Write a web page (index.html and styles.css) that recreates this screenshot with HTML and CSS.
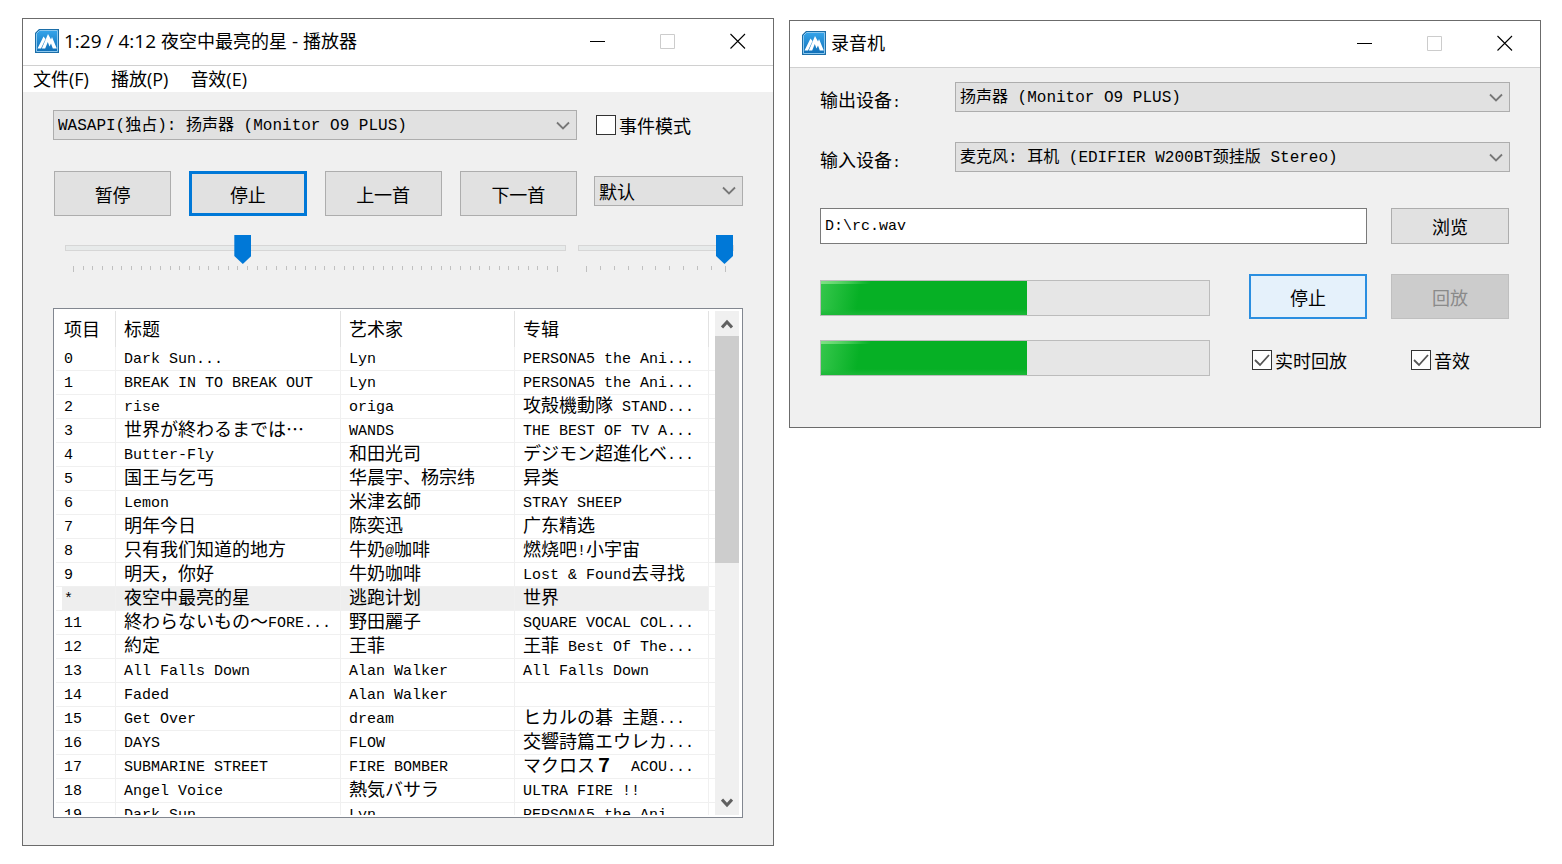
FILE: index.html
```html
<!DOCTYPE html>
<html lang="zh-CN">
<head>
<meta charset="utf-8">
<title>播放器</title>
<link rel="stylesheet" href="styles.css">
</head>
<body>
<svg class="defs" aria-hidden="true">
  <defs>
    <linearGradient id="sky" x1="0" y1="0" x2="0" y2="1">
      <stop offset="0" stop-color="#35a4ea"/>
      <stop offset="1" stop-color="#1170b8"/>
    </linearGradient>
    <symbol id="logo" viewBox="0 0 24 24">
      <path d="M4 0H24V24H0V4Z" fill="#1c6ea8"/>
      <path d="M4.500 1.500H22.500V22.500H1.500V4.500Z" fill="url(#sky)" stroke="#8cc8ee" stroke-width="1"/>
      <path d="M2.500 19.500L8.500 7.500L10.500 10L6 19.500ZM6.800 19.500L13 5L16 10.500L17 8L21.800 19.500H17.800L16 14.500L14.500 17.500L12.800 13L10.200 19.500Z" fill="#fff"/>
    </symbol>
    <symbol id="min" viewBox="0 0 16 16"><path d="M0 8.500H15" stroke="#000"/></symbol>
    <symbol id="max" viewBox="0 0 16 16"><path d="M.5 1.500H14.500V15.500H.5Z" stroke="#ccc" fill="none"/></symbol>
    <symbol id="close" viewBox="0 0 16 16"><path d="M.5 1L15 15.500M15 1L.5 15.500" stroke="#000" stroke-width="1.100"/></symbol>
  </defs>
</svg>

<main class="desktop">
  <section class="window player" aria-label="播放器">
    <header class="titlebar">
      <svg class="logo"><use href="#logo"/></svg>
      <h1 class="title"><span>1:29 / 4:12 </span>夜空中最亮的星<span> - </span>播放器</h1>
      <button class="caption" aria-label="最小化"><svg><use href="#min"/></svg></button>
      <button class="caption" aria-label="最大化" disabled><svg><use href="#max"/></svg></button>
      <button class="caption" aria-label="关闭"><svg><use href="#close"/></svg></button>
    </header>
    <nav class="menu">
      <button>文件(F)</button>
      <button>播放(P)</button>
      <button>音效(E)</button>
    </nav>
    <div class="player-body">
      <div class="controls">
        <select class="combo" aria-label="输出"><option>WASAPI(独占): 扬声器 (Monitor O9 PLUS)</option></select>
        <label class="check"><input type="checkbox">事件模式</label>
        <div class="transport">
          <button class="push">暂停</button>
          <button class="push focused">停止</button>
          <button class="push">上一首</button>
          <button class="push">下一首</button>
        </div>
        <select class="combo cjk" aria-label="播放模式"><option>默认</option></select>
      </div>
      <div class="sliders">
        <div class="slider">
          <input type="range" min="0" max="252" value="88" aria-label="进度">
          <div class="ticks"><i></i><i></i><i></i><i></i><i></i><i></i><i></i><i></i><i></i><i></i><i></i><i></i><i></i><i></i><i></i><i></i><i></i><i></i><i></i><i></i><i></i><i></i><i></i><i></i><i></i><i></i><i></i><i></i><i></i><i></i><i></i><i></i><i></i><i></i><i></i><i></i><i></i><i></i><i></i><i></i><i></i><i></i><i></i><i></i><i></i><i></i><i></i><i></i><i></i><i></i><i></i></div>
        </div>
        <div class="slider volume">
          <input type="range" min="0" max="10" value="10" aria-label="音量">
          <div class="ticks"><i></i><i></i><i></i><i></i><i></i><i></i><i></i><i></i><i></i><i></i><i></i></div>
        </div>
      </div>
      <div class="list">
        <div class="rows">
          <table>
            <colgroup><col class="c-no"><col class="c-title"><col class="c-artist"><col><col class="c-end"></colgroup>
            <thead><tr><th>项目</th><th>标题</th><th>艺术家</th><th>专辑</th><th></th></tr></thead>
            <tbody>
              <tr><td>0</td><td>Dark Sun...</td><td>Lyn</td><td>PERSONA5 the Ani...</td><td></td></tr>
              <tr><td>1</td><td>BREAK IN TO BREAK OUT</td><td>Lyn</td><td>PERSONA5 the Ani...</td><td></td></tr>
              <tr><td>2</td><td>rise</td><td>origa</td><td><span class="cjk">攻殻機動隊</span> STAND...</td><td></td></tr>
              <tr><td>3</td><td><span class="cjk" lang="ja">世界が終わるまでは…</span></td><td>WANDS</td><td>THE BEST OF TV A...</td><td></td></tr>
              <tr><td>4</td><td>Butter-Fly</td><td><span class="cjk">和田光司</span></td><td><span class="cjk" lang="ja">デジモン超進化ベ</span>...</td><td></td></tr>
              <tr><td>5</td><td><span class="cjk">国王与乞丐</span></td><td><span class="cjk">华晨宇、杨宗纬</span></td><td><span class="cjk">异类</span></td><td></td></tr>
              <tr><td>6</td><td>Lemon</td><td><span class="cjk">米津玄師</span></td><td>STRAY SHEEP</td><td></td></tr>
              <tr><td>7</td><td><span class="cjk">明年今日</span></td><td><span class="cjk">陈奕迅</span></td><td><span class="cjk">广东精选</span></td><td></td></tr>
              <tr><td>8</td><td><span class="cjk">只有我们知道的地方</span></td><td><span class="cjk">牛奶</span>@<span class="cjk">咖啡</span></td><td><span class="cjk">燃烧吧</span>!<span class="cjk">小宇宙</span></td><td></td></tr>
              <tr><td>9</td><td><span class="cjk">明天，你好</span></td><td><span class="cjk">牛奶咖啡</span></td><td>Lost &amp; Found<span class="cjk">去寻找</span></td><td></td></tr>
              <tr class="current"><td>*</td><td><span class="cjk">夜空中最亮的星</span></td><td><span class="cjk">逃跑计划</span></td><td><span class="cjk">世界</span></td><td></td></tr>
              <tr><td>11</td><td><span class="cjk" lang="ja">終わらないもの～</span>FORE...</td><td><span class="cjk">野田麗子</span></td><td>SQUARE VOCAL COL...</td><td></td></tr>
              <tr><td>12</td><td><span class="cjk">約定</span></td><td><span class="cjk">王菲</span></td><td><span class="cjk">王菲</span> Best Of The...</td><td></td></tr>
              <tr><td>13</td><td>All Falls Down</td><td>Alan Walker</td><td>All Falls Down</td><td></td></tr>
              <tr><td>14</td><td>Faded</td><td>Alan Walker</td><td></td><td></td></tr>
              <tr><td>15</td><td>Get Over</td><td>dream</td><td><span class="cjk" lang="ja">ヒカルの碁</span> <span class="cjk" lang="ja">主題</span>...</td><td></td></tr>
              <tr><td>16</td><td>DAYS</td><td>FLOW</td><td><span class="cjk" lang="ja">交響詩篇エウレカ</span>...</td><td></td></tr>
              <tr><td>17</td><td>SUBMARINE STREET</td><td>FIRE BOMBER</td><td><span class="cjk" lang="ja">マクロス<b>７</b>　</span>ACOU...</td><td></td></tr>
              <tr><td>18</td><td>Angel Voice</td><td><span class="cjk" lang="ja">熱気バサラ</span></td><td>ULTRA FIRE !!</td><td></td></tr>
              <tr><td>19</td><td>Dark Sun...</td><td>Lyn</td><td>PERSONA5 the Ani...</td><td></td></tr>
            </tbody>
          </table>
        </div>
        <div class="scrollbar">
          <button aria-label="向上滚动"><svg viewBox="0 0 12 10"><path d="M1 8.500L6 3L11 8.500"/></svg></button>
          <div class="lane"><div class="thumb"></div></div>
          <button aria-label="向下滚动"><svg viewBox="0 0 12 10"><path d="M1 1.500L6 7L11 1.500"/></svg></button>
        </div>
      </div>
    </div>
  </section>

  <section class="window recorder" aria-label="录音机">
    <header class="titlebar">
      <svg class="logo"><use href="#logo"/></svg>
      <h1 class="title">录音机</h1>
      <button class="caption" aria-label="最小化"><svg><use href="#min"/></svg></button>
      <button class="caption" aria-label="最大化" disabled><svg><use href="#max"/></svg></button>
      <button class="caption" aria-label="关闭"><svg><use href="#close"/></svg></button>
    </header>
    <div class="recorder-body">
      <div class="devices">
        <label for="out">输出设备<span class="mono">:</span></label>
        <select id="out" class="combo"><option>扬声器 (Monitor O9 PLUS)</option></select>
        <label for="in">输入设备<span class="mono">:</span></label>
        <select id="in" class="combo"><option>麦克风: 耳机 (EDIFIER W200BT颈挂版 Stereo)</option></select>
      </div>
      <div class="file">
        <input type="text" class="path" value="D:\rc.wav" aria-label="文件路径">
        <button class="push short">浏览</button>
      </div>
      <div class="record">
        <div class="meters">
          <progress max="100" value="53" aria-label="左声道"></progress>
          <progress max="100" value="53" aria-label="右声道"></progress>
        </div>
        <div class="column">
          <button class="push hot">停止</button>
          <label class="check inset"><input type="checkbox" checked>实时回放</label>
        </div>
        <div class="column">
          <button class="push" disabled>回放</button>
          <label class="check indent"><input type="checkbox" checked>音效</label>
        </div>
      </div>
    </div>
  </section>
</main>
</body>
</html>
```

FILE: styles.css
```css
* { box-sizing: border-box; }

body {
  margin: 0;
  background: #fff;
  color: #000;
  font: 18px/24px "Noto Sans CJK SC", sans-serif;
}

button, select, input { margin: 0; font: inherit; color: inherit; border-radius: 0; }
button { padding: 0; border: 0; background: none; }

.defs { position: absolute; width: 0; height: 0; }

.desktop {
  display: flex;
  gap: 15px;
  height: 100vh;
  min-height: 500px;
  padding: 18px 21px 18px 22px;
}

.window {
  flex: 1 1 0;
  min-width: 0;
  border: 1px solid #6b6b6b;
  background: #f0f0f0;
}

.player { display: flex; flex-direction: column; }
.recorder { align-self: flex-start; margin-top: 2px; }

/* Title bar */
.titlebar {
  display: flex;
  align-items: center;
  height: 47px;
  flex: none;
  padding: 0 0 2px 12px;
  background: #fff;
  border-bottom: 1px solid #d0d0d0;
}
.logo { width: 24px; height: 24px; margin-right: 5px; }
.title {
  flex: 1;
  min-width: 0;
  margin: 0;
  font: 18px/24px "Open Sans", "Noto Sans CJK SC", sans-serif;
  white-space: pre;
}
.title span { font-size: 19px; }
.caption { width: 70px; height: 44px; display: grid; place-items: center; }
.caption svg { width: 16px; height: 16px; }

/* Menu */
.menu {
  display: flex;
  flex: none;
  gap: 22px;
  height: 26px;
  padding: 0 10px;
  background: #fff;
}
.menu button { font: 18px/26px "Open Sans", "Noto Sans CJK SC", sans-serif; }

/* Shared controls */
.combo {
  appearance: none;
  width: 100%;
  min-width: 0;
  height: 30px;
  padding: 1px 30px 0 4px;
  border: 1px solid #adadad;
  background: #e1e1e1 url("data:image/svg+xml,%3Csvg xmlns='http://www.w3.org/2000/svg' width='14' height='9'%3E%3Cpath d='M1 1.500L7 7.500L13 1.500' fill='none' stroke='%23777' stroke-width='1.800'/%3E%3C/svg%3E") no-repeat right 6px center;
  font: 16px/24px "Liberation Mono", "Noto Sans CJK SC", monospace;
}

.push {
  height: 45px;
  min-width: 0;
  border: 1px solid #adadad;
  background: #e1e1e1;
  white-space: nowrap;
}
.push.focused { border: 3px solid #0078d7; }
.push.hot { border: 2px solid #2a8ee0; background: #e5f1fb; }
.push:disabled { border-color: #bfbfbf; background: #ccc; color: #8a8a8a; }
.push.short { height: 36px; }

.check { display: flex; align-items: center; gap: 3px; height: 20px; white-space: nowrap; }
.check input {
  appearance: none;
  flex: none;
  width: 20px;
  height: 20px;
  border: 1px solid #333;
  background: #fff;
}
.check input:checked {
  background: #fff url("data:image/svg+xml,%3Csvg xmlns='http://www.w3.org/2000/svg' width='18' height='18'%3E%3Cpath d='M2 9L7 14L16 4' fill='none' stroke='%23555' stroke-width='1.800'/%3E%3C/svg%3E") no-repeat center;
}

.mono { font: 15px/15px "Liberation Mono", monospace; }

/* Player */
.player-body {
  flex: 1;
  min-height: 0;
  display: flex;
  flex-direction: column;
  padding: 18px 30px 27px;
}

.controls {
  display: grid;
  grid-template-columns: minmax(0, 1fr) 149px;
  gap: 31px 17px;
  align-items: center;
}
.controls .combo.cjk { margin-top: -6px; padding-top: 0; }
.controls .check { padding-left: 2px; }
.transport { display: grid; grid-template-columns: repeat(4, minmax(0, 1fr)); gap: 18px; padding-left: 1px; }

.sliders { display: flex; gap: 12px; padding: 19px 9px 0 12px; }
.slider { flex: 1; min-width: 0; }
.volume { flex: 0 0 156px; }
.slider input {
  appearance: none;
  display: block;
  width: 100%;
  height: 26px;
  background: none;
}
.slider input::-webkit-slider-runnable-track {
  height: 6px;
  border: 1px solid #d6d6d6;
  background: #e7eaea;
}
.slider input::-webkit-slider-thumb {
  appearance: none;
  width: 17px;
  height: 29px;
  margin-top: -11px;
  background: #0078d7;
  clip-path: polygon(0 0, 100% 0, 100% 72%, 50% 100%, 0 72%);
}
.ticks { display: flex; justify-content: space-between; height: 11px; padding: 5px 8px 0; }
.ticks i { width: 1px; height: 4px; background: #c0c0c0; }
.ticks i:first-child, .ticks i:last-child { height: 6px; }

.list {
  flex: 1;
  min-height: 0;
  display: flex;
  margin-top: 36px;
  padding: 2px 3px 2px 2px;
  border: 1px solid #828790;
  background: #fff;
}
.rows { flex: 1; min-width: 0; overflow: hidden; }

table { width: 100%; table-layout: fixed; border-collapse: separate; border-spacing: 0; }
.c-no { width: 60px; }
.c-title { width: 225px; }
.c-artist { width: 174px; }
.c-end { width: 6px; }

th {
  height: 36px;
  padding: 0 0 2px 8px;
  border-right: 1px solid #e2e2e2;
  font-weight: 400;
  text-align: left;
}
td {
  height: 24px;
  padding: 3px 0 0 8px;
  border-right: 1px solid #f0f0f0;
  border-bottom: 1px solid #f0f0f0;
  font: 15px/20px "Liberation Mono", monospace;
  white-space: nowrap;
}
th:last-child, td:last-child { border-right: 0; padding: 0; }
td .cjk { font: 18px/12px "Noto Sans CJK SC", sans-serif; vertical-align: -1px; }
td .cjk[lang="ja"] { font-family: "Noto Sans CJK JP", sans-serif; }
.combo.cjk { font: 18px/24px "Noto Sans CJK SC", sans-serif; }
.current td:not(:last-child) { background: #eee; }
.current td:first-child:not(:last-child) { background: linear-gradient(#eee, #eee) 6px 0 no-repeat; }

.scrollbar { flex: 0 0 24px; display: flex; flex-direction: column; background: #f0f0f0; }
.scrollbar button { height: 25px; display: grid; place-items: center; }
.scrollbar svg { width: 12px; height: 10px; }
.scrollbar path { fill: none; stroke: #606060; stroke-width: 3; }
.lane { flex: 1; }
.thumb { height: 50%; background: #cdcdcd; }

/* Recorder */
.recorder-body { display: flex; flex-direction: column; padding: 14px 30px 51px; }
.devices {
  display: grid;
  grid-template-columns: 135px minmax(0, 1fr);
  row-gap: 30px;
}
.devices label { padding-top: 5px; line-height: 24px; }
.file {
  display: grid;
  grid-template-columns: minmax(0, 1fr) 118px;
  gap: 24px;
  margin-top: 36px;
  padding-right: 1px;
}
.path {
  min-width: 0;
  height: 36px;
  padding: 0 4px;
  border: 1px solid #7a7a7a;
  background: #fff;
  font: 15px/24px "Liberation Mono", monospace;
}
.record {
  display: grid;
  grid-template-columns: minmax(0, 1fr) 118px 118px;
  column-gap: 24px;
  margin-top: 30px;
  padding-right: 1px;
}
.meters { display: flex; flex-direction: column; gap: 24px; padding: 6px 15px 0 0; }
.column { display: flex; flex-direction: column; gap: 31px; }
.inset { padding-left: 3px; }
.indent { padding-left: 20px; }

progress {
  appearance: none;
  display: block;
  width: 100%;
  height: 36px;
  border: 1px solid #bcbcbc;
}
progress::-webkit-progress-bar { background: #e6e6e6; }
progress::-webkit-progress-value {
  background:
    linear-gradient(90deg, #7fe084, #06b02500 50px) top / 100% 3px no-repeat,
    linear-gradient(0deg, #1cb738, #06b02500) bottom / 100% 6px no-repeat,
    linear-gradient(100deg, #36c74c, #06b025 40px);
}
```
